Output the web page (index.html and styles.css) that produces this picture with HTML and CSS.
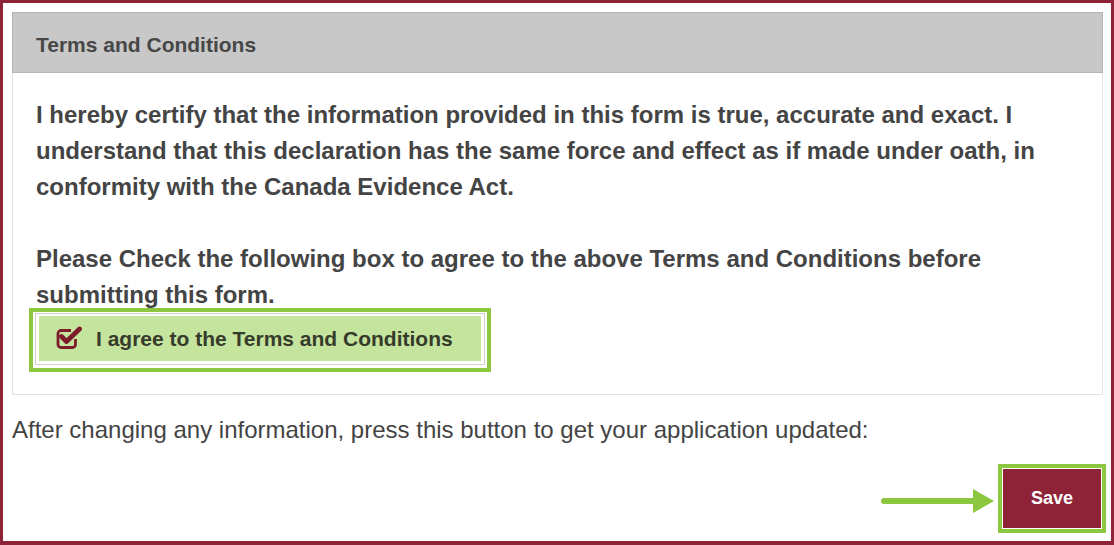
FILE: index.html
```html
<!DOCTYPE html>
<html>
<head>
<meta charset="utf-8">
<link rel="stylesheet" href="styles.css">
</head>
<body>
<div class="frame">
  <div class="panel">
    <div class="panel-head">Terms and Conditions</div>
    <div class="panel-body">
      <p class="decl">I hereby certify that the information provided in this form is true, accurate and exact. I understand that this declaration has the same force and effect as if made under oath, in conformity with the Canada Evidence Act.</p>
      <p class="decl">Please Check the following box to agree to the above Terms and Conditions before submitting this form.</p>
      <div class="agree-outer">
        <div class="agree-inner">
          <div class="agree-fill">
            <svg class="check" width="27" height="23" viewBox="0 0 27 23">
              <path d="M15 4.5 H5 a3 3 0 0 0 -3 3 V18.5 a3 3 0 0 0 3 3 H16.5 a3 3 0 0 0 3 -3 V13" fill="none" stroke="#7c1c2b" stroke-width="2.8"/>
              <path d="M5.5 10.5 L10.5 15.5 L23.5 3" fill="none" stroke="#7c1c2b" stroke-width="4.8" stroke-linecap="round" stroke-linejoin="round"/>
            </svg>
            <span class="agree-text">I agree to the Terms and Conditions</span>
          </div>
        </div>
      </div>
    </div>
  </div>
  <p class="note">After changing any information, press this button to get your application updated:</p>
  <div class="actions">
    <svg class="arrow" width="115" height="26" viewBox="0 0 115 26">
      <line x1="3" y1="12" x2="95" y2="12" stroke="#8dc63f" stroke-width="6" stroke-linecap="round"/>
      <polygon points="92,0 113,12 92,24" fill="#8dc63f"/>
    </svg>
    <div class="save-outer"><button class="save">Save</button></div>
  </div>
</div>
</body>
</html>
```
FILE: styles.css
```css
html, body {
  margin: 0;
  padding: 0;
  background: #fff;
}
body {
  font-family: "Liberation Sans", Arial, sans-serif;
}
.frame {
  width: 1114px;
  height: 545px;
  box-sizing: border-box;
  border: 3px solid #8e2338;
  border-bottom-width: 4px;
  padding: 9px 7px 0 9px;
  display: flex;
  flex-direction: column;
}
.panel {
  width: 1091px;
}
.panel-head {
  box-sizing: border-box;
  height: 61px;
  background: #c8c8c8;
  border: 1px solid #b5b5b5;
  padding: 4px 0 0 23px;
  display: flex;
  align-items: center;
  font-size: 21px;
  font-weight: bold;
  color: #474747;
}
.panel-body {
  border: 1px solid #e2e2e2;
  border-top: none;
  padding: 24px 0 22px 16px;
}
.decl {
  margin: 0 0 36px 0;
  padding-left: 7px;
  font-size: 24px;
  font-weight: bold;
  line-height: 36px;
  color: #444;
}
.decl + .decl {
  margin-bottom: -5px;
}
.agree-outer {
  width: 450px;
  border: 4px solid #8dc63f;
  padding: 1px 2px 3px 2px;
}
.agree-inner {
  border: 1px solid #cfcfcf;
  padding: 2px 3px 3px 3px;
}
.agree-fill {
  background: #c5e49d;
  height: 45px;
  display: flex;
  align-items: center;
  padding-left: 17px;
}
.check {
  display: block;
  margin-right: 13px;
  margin-top: -2px;
}
.agree-text {
  font-size: 21px;
  font-weight: bold;
  color: #363b2b;
}
.note {
  margin: 20px 0 0 0;
  font-size: 24px;
  line-height: 30px;
  color: #444;
}
.actions {
  margin-top: 19px;
  display: flex;
  justify-content: flex-end;
  align-items: center;
  margin-right: -2px;
}
.arrow {
  display: block;
  margin-right: 2px;
  margin-top: 7px;
}
.save-outer {
  border: 4px solid #8dc63f;
  padding: 1px;
}
.save {
  display: block;
  width: 98px;
  height: 59px;
  border: none;
  background: #8e2338;
  color: #fff;
  font-family: "Liberation Sans", Arial, sans-serif;
  font-size: 18px;
  font-weight: bold;
  padding: 0;
}
```
